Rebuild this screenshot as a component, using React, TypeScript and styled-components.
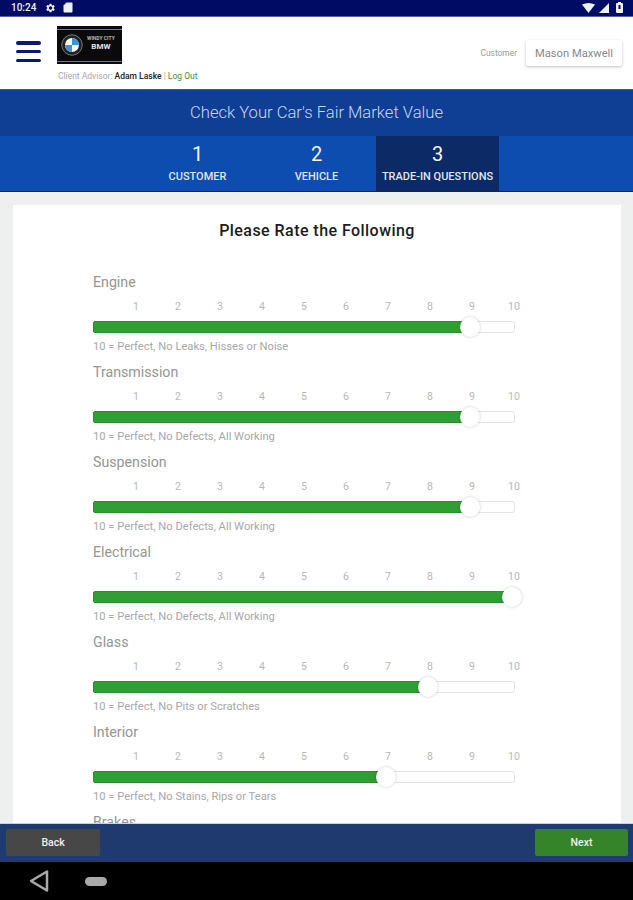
import React from "react";
import styled, { createGlobalStyle } from "styled-components";

const GlobalStyle = createGlobalStyle`
  html, body { margin: 0; padding: 0; background: #eef0f0; }
  * { box-sizing: border-box; }
  body { font-family: Roboto, "Liberation Sans", sans-serif; }
`;

const Page = styled.div`
  width: 633px;
  height: 900px;
  display: flex;
  flex-direction: column;
  overflow: hidden;
`;

const StatusBar = styled.div`
  height: 17px;
  flex: none;
  background: #000c63;
  border-bottom: 1px solid #5a62a8;
  display: flex;
  align-items: center;
  padding: 0 10px 1px 11px;
  color: #eef0f6;
`;
const Time = styled.span`
  font-size: 10px;
  font-weight: 500;
  margin-right: 8px;
`;
const StatusRight = styled.div`
  margin-left: auto;
  display: flex;
  align-items: center;
  gap: 4px;
`;

const Header = styled.header`
  height: 72px;
  flex: none;
  background: #fff;
  display: flex;
  padding: 9px 11px 0 16px;
`;
const Burger = styled.div`
  width: 25px;
  height: 21px;
  margin-top: 15px;
  display: flex;
  flex-direction: column;
  justify-content: space-between;
`;
const BurgerBar = styled.div`
  height: 3.5px;
  border-radius: 2px;
  background: #0c1a6b;
`;
const Brand = styled.div`
  margin-left: 16px;
  display: flex;
  flex-direction: column;
`;
const Logo = styled.div`
  width: 65px;
  height: 38px;
  background: #0a0a0a;
  display: flex;
  align-items: center;
  padding: 0 0 0 4px;
  gap: 4px;
  position: relative;
`;
const LogoLine = styled.div<{ $bottom?: boolean }>`
  position: absolute;
  left: 0;
  right: 0;
  height: 1px;
  background: #3f8f96;
  ${(p) => (p.$bottom ? "bottom: 2px;" : "top: 3px;")}
`;
const LogoText = styled.div`
  display: flex;
  flex-direction: column;
  align-items: center;
  padding-bottom: 4px;
  color: #e4e4e4;
  font-weight: 700;
`;
const LogoSmall = styled.span`
  font-size: 5px;
  line-height: 7px;
  color: #b5b5b5;
  white-space: nowrap;
`;
const LogoBig = styled.span`
  font-size: 8px;
  line-height: 9px;
`;
const Advisor = styled.div`
  margin-top: 7px;
  margin-left: 1px;
  font-size: 8.5px;
  line-height: 10px;
  color: #a8a8a8;
  white-space: nowrap;
`;
const AdvisorName = styled.span`
  color: #222;
  font-weight: 500;
`;
const LogOut = styled.span`
  color: #2f9a35;
`;
const CustomerBox = styled.div`
  margin-left: auto;
  margin-top: 14px;
  height: 26px;
  display: flex;
  align-items: center;
`;
const CustomerLabel = styled.span`
  font-size: 8.4px;
  line-height: 9px;
  color: #9a9a9a;
  margin-right: 9px;
`;
const CustomerName = styled.div`
  width: 96px;
  height: 26px;
  border-radius: 2px;
  background: #fff;
  box-shadow: 0 1px 3px rgba(0, 0, 0, 0.25);
  display: flex;
  align-items: center;
  justify-content: center;
  font-size: 11.2px;
  color: #8a8a8a;
`;

const TitleBand = styled.div`
  height: 47px;
  flex: none;
  background: #0f3f94;
  border-top: 1px solid #2c58ad;
  padding-bottom: 2px;
  display: flex;
  align-items: center;
  justify-content: center;
  font-size: 16.6px;
  font-weight: 300;
  color: #c9d6ee;
`;

const Steps = styled.nav`
  height: 56px;
  flex: none;
  background: #0e4db0;
  border-bottom: 1px solid #1212b8;
  display: flex;
  padding-left: 138px;
`;
const Step = styled.div<{ $active?: boolean; $w: number }>`
  width: ${(p) => p.$w}px;
  background: ${(p) => (p.$active ? "#0c2a66" : "transparent")};
  display: flex;
  flex-direction: column;
  align-items: center;
  color: #f2f5fb;
`;
const StepNum = styled.span`
  font-size: 20px;
  line-height: 24px;
  margin-top: 6px;
`;
const StepName = styled.span`
  font-size: 11px;
  font-weight: 500;
  line-height: 12px;
  margin-top: 5px;
  white-space: nowrap;
  color: #dfe6f4;
`;

const Main = styled.main`
  flex: 1;
  min-height: 0;
  overflow: hidden;
  background: #eef0f0;
  padding: 13px 12px 0 13px;
`;
const Card = styled.section`
  background: #fff;
  padding: 16px 118px 0 80px;
  min-height: 700px;
`;
const Heading = styled.h1`
  margin: 0 0 33px;
  font-size: 16px;
  line-height: 20px;
  font-weight: 500;
  letter-spacing: 0.45px;
  color: #1c1c1c;
  text-align: center;
  transform: translateX(19px);
`;

const Rating = styled.div`
  height: 90px;
`;
const RatingLabel = styled.div`
  font-size: 14.2px;
  line-height: 16px;
  color: #959595;
`;
const Ticks = styled.div`
  display: flex;
  padding-left: 22px;
  margin-top: 11px;
`;
const Tick = styled.span`
  width: 42px;
  flex: none;
  text-align: center;
  font-size: 10.5px;
  line-height: 12px;
  color: #b8b8b8;
`;
const Track = styled.div`
  position: relative;
  height: 12px;
  width: 422px;
  margin-top: 8px;
  border: 1px solid #e4e4e4;
  border-radius: 3px;
  background: #fff;
`;
const Fill = styled.div`
  height: 12px;
  margin: -1px 0 0 -1px;
  background: #2f9e33;
  border: 1px solid #2a8f2e;
  border-radius: 2px 0 0 2px;
`;
const Thumb = styled.div`
  position: absolute;
  top: -5px;
  width: 20px;
  height: 20px;
  margin-left: -10px;
  border-radius: 50%;
  background: #fff;
  box-shadow: 0 0 3px rgba(0, 0, 0, 0.22);
`;
const Caption = styled.div`
  margin-top: 8px;
  font-size: 11.2px;
  line-height: 12px;
  color: #a8a8a8;
  white-space: nowrap;
`;

const Footer = styled.footer`
  height: 39px;
  flex: none;
  background: #1f3a6e;
  border-top: 1px solid #c9d0e0;
  display: flex;
  justify-content: space-between;
  padding: 5px 5px 0 6px;
`;
const FooterButton = styled.button<{ $primary?: boolean }>`
  width: ${(p) => (p.$primary ? 93 : 94)}px;
  height: 27px;
  border: 0;
  border-radius: 2px;
  background: ${(p) => (p.$primary ? "#358429" : "#474747")};
  color: #f0f0f0;
  font-family: inherit;
  font-size: 10.5px;
  font-weight: 500;
  padding: 0;
`;

const NavBar = styled.div`
  height: 38px;
  flex: none;
  background: #000;
  display: flex;
  align-items: center;
  padding-left: 29px;
  gap: 36px;
`;
const HomePill = styled.div`
  width: 22px;
  height: 9px;
  border-radius: 5px;
  background: #a9a9a9;
`;

const ratings = [
  { label: "Engine", value: 9, caption: "10 = Perfect, No Leaks, Hisses or Noise" },
  { label: "Transmission", value: 9, caption: "10 = Perfect, No Defects, All Working" },
  { label: "Suspension", value: 9, caption: "10 = Perfect, No Defects, All Working" },
  { label: "Electrical", value: 10, caption: "10 = Perfect, No Defects, All Working" },
  { label: "Glass", value: 8, caption: "10 = Perfect, No Pits or Scratches" },
  { label: "Interior", value: 7, caption: "10 = Perfect, No Stains, Rips or Tears" },
];

const numbers = [1, 2, 3, 4, 5, 6, 7, 8, 9, 10];

function BmwRoundel() {
  return (
    <svg width="22" height="22" viewBox="0 0 30 30">
      <circle cx="15" cy="15" r="14" fill="#222" stroke="#999" strokeWidth="1" />
      <circle cx="15" cy="15" r="9.5" fill="#fff" />
      <path d="M15 5.5A9.5 9.5 0 0 1 24.5 15H15z" fill="#3d95d6" />
      <path d="M15 24.5A9.5 9.5 0 0 1 5.5 15H15z" fill="#3d95d6" />
    </svg>
  );
}

function App() {
  return (
    <Page>
      <GlobalStyle />
      <StatusBar>
        <Time>10:24</Time>
        <svg width="12" height="12" viewBox="0 0 24 24" fill="currentColor">
          <path d="M19.4 13a7.5 7.5 0 0 0 0-2l2.1-1.6-2-3.5-2.5 1a7.5 7.5 0 0 0-1.7-1L15 3.300h-4l-.4 2.600a7.500 7.500 0 0 0-1.700 1l-2.500-1-2 3.500L6.500 11a7.500 7.500 0 0 0 0 2l-2.100 1.600 2 3.500 2.500-1a7.500 7.500 0 0 0 1.700 1l.4 2.600h4l.4-2.600a7.500 7.500 0 0 0 1.700-1l2.500 1 2-3.500zM13 15.500a3.500 3.500 0 1 1 0-7 3.500 3.500 0 0 1 0 7z" />
        </svg>
        <svg width="10" height="11" viewBox="0 0 10 11" fill="currentColor" style={{ marginLeft: 7 }}>
          <path d="M3.500 0.500H8.500a1 1 0 0 1 1 1v8a1 1 0 0 1-1 1h-7a1 1 0 0 1-1-1V3.500z" />
        </svg>
        <StatusRight>
          <svg width="13" height="10" viewBox="0 0 13 10" fill="currentColor">
            <path d="M0 1.500Q6.500-1.500 13 1.500L6.500 10z" />
          </svg>
          <svg width="10" height="10" viewBox="0 0 10 10" fill="currentColor">
            <path d="M10 0V10H0z" />
          </svg>
          <svg width="7" height="11" viewBox="0 0 7 11" style={{ marginLeft: 3 }}>
            <rect x="0" y="1" width="7" height="10" rx="1" fill="currentColor" />
            <rect x="2" y="0" width="3" height="2" fill="currentColor" />
            <rect x="2.500" y="3" width="2" height="4" fill="#000c63" />
          </svg>
        </StatusRight>
      </StatusBar>

      <Header>
        <Burger>
          <BurgerBar />
          <BurgerBar />
          <BurgerBar />
        </Burger>
        <Brand>
          <Logo>
            <LogoLine />
            <LogoLine $bottom />
            <BmwRoundel />
            <LogoText>
              <LogoSmall>WINDY CITY</LogoSmall>
              <LogoBig>BMW</LogoBig>
            </LogoText>
          </Logo>
          <Advisor>
            Client Advisor: <AdvisorName>Adam Laske</AdvisorName> | <LogOut>Log Out</LogOut>
          </Advisor>
        </Brand>
        <CustomerBox>
          <CustomerLabel>Customer</CustomerLabel>
          <CustomerName>Mason Maxwell</CustomerName>
        </CustomerBox>
      </Header>

      <TitleBand>Check Your Car's Fair Market Value</TitleBand>

      <Steps>
        <Step $w={119}>
          <StepNum>1</StepNum>
          <StepName>CUSTOMER</StepName>
        </Step>
        <Step $w={119}>
          <StepNum>2</StepNum>
          <StepName>VEHICLE</StepName>
        </Step>
        <Step $w={123} $active>
          <StepNum>3</StepNum>
          <StepName>TRADE-IN QUESTIONS</StepName>
        </Step>
      </Steps>

      <Main>
        <Card>
          <Heading>Please Rate the Following</Heading>
          {ratings.map((r) => (
            <Rating key={r.label}>
              <RatingLabel>{r.label}</RatingLabel>
              <Ticks>
                {numbers.map((n) => (
                  <Tick key={n}>{n}</Tick>
                ))}
              </Ticks>
              <Track>
                <Fill style={{ width: r.value * 42 - 1 }} />
                <Thumb style={{ left: r.value * 42 - 2 }} />
              </Track>
              <Caption>{r.caption}</Caption>
            </Rating>
          ))}
          <Rating>
            <RatingLabel>Brakes</RatingLabel>
          </Rating>
        </Card>
      </Main>

      <Footer>
        <FooterButton>Back</FooterButton>
        <FooterButton $primary>Next</FooterButton>
      </Footer>

      <NavBar>
        <svg width="20" height="24" viewBox="0 0 20 24" fill="none" stroke="#a9a9a9" strokeWidth="2.500" strokeLinejoin="round">
          <path d="M18 2.500V21.500L2 12z" />
        </svg>
        <HomePill />
      </NavBar>
    </Page>
  );
}

export default App;
